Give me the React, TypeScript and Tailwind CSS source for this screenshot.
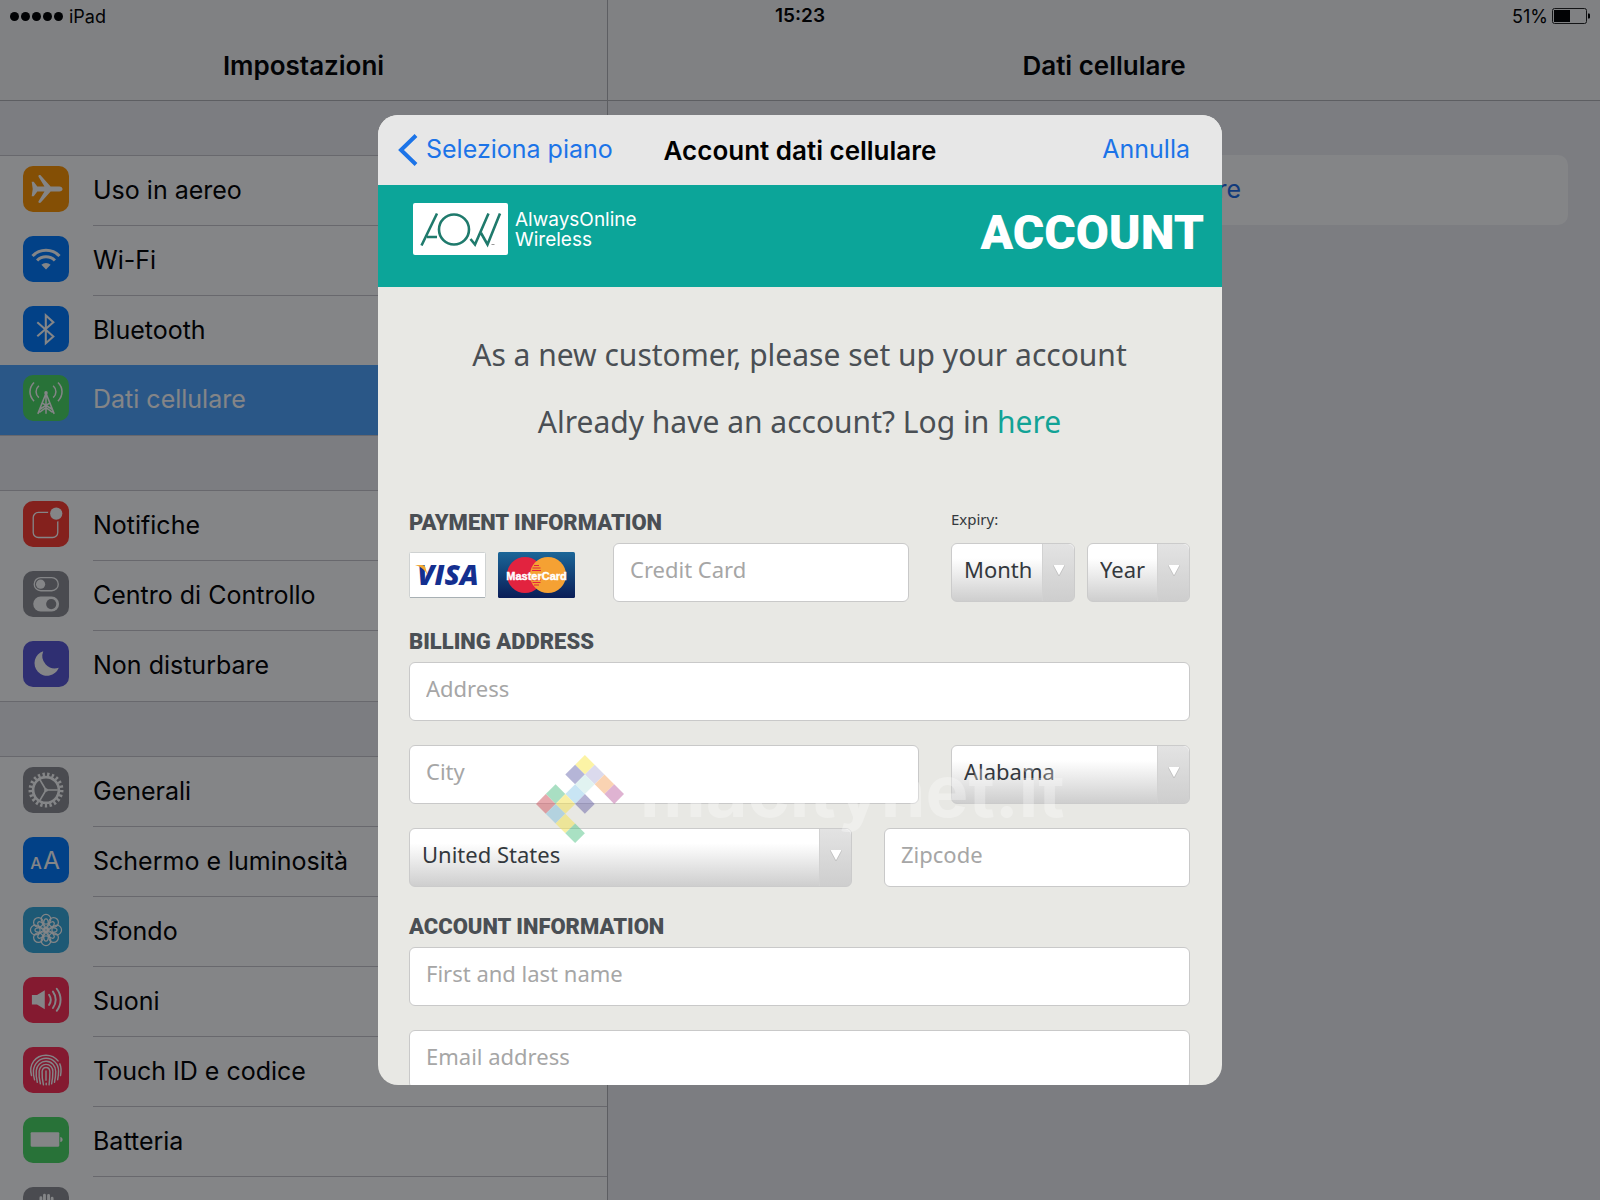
import { useId } from "react";
import type { ReactNode } from "react";

const ANGLES = [0, 45, 90, 135, 180, 225, 270, 315];

const icons: Record<string, ReactNode> = {
  airplane: (
    <path
      fill="#fff"
      d="M8.500 15.500h2L14 20h7L15.200 10.400c-.7-1.400 1.200-2.200 2.200-1.200L27 20h8.500c2 0 3.200 1.300 3.200 2.500S37.500 25 35.500 25H27l-9.600 10.800c-1 1-2.900.2-2.200-1.200L21 25h-7l-3.500 4.500h-2l1-7z"
    />
  ),
  wifi: (
    <>
      <g fill="none" stroke="#fff" strokeWidth="3">
        <path d="M9.300 19.600a18.300 18.300 0 0 1 26.400 0" />
        <path d="M13.800 24a12.200 12.200 0 0 1 17.400 0" />
      </g>
      <path fill="#fff" d="M18 28.200a6.400 6.400 0 0 1 9 0L22.500 32.700z" />
    </>
  ),
  bluetooth: (
    <path
      fill="none"
      stroke="#fff"
      strokeWidth="2"
      d="M14 16l15.700 13.800-7.400 6.600V9.200l7.400 6.600L14 29.600"
    />
  ),
  tower: (
    <g fill="none" stroke="#fff" strokeWidth="1.500">
      <path d="M15.500 10.500c-3.600 3.200-3.600 8.600 0 11.600M29.500 10.500c3.600 3.200 3.600 8.600 0 11.600" />
      <path d="M10.800 7.400c-5.300 5.200-5.300 13 0 18.200M34.200 7.400c5.300 5.200 5.300 13 0 18.200" />
      <path d="M22.500 17v21M14.500 38l7.500-19h1l7.500 19M19 27.500l9.500 6M26 27.500l-9.500 6M16 36.500l6.500-4.500 6.500 4.500" />
      <circle cx="22.500" cy="17.500" r="1" fill="#fff" />
    </g>
  ),
  notifications: (
    <>
      <rect x="10" y="11.200" width="24" height="24.500" rx="5" fill="none" stroke="#fff" strokeWidth="1.300" />
      <circle cx="32.500" cy="12.300" r="8" fill="#ff3b30" />
      <circle cx="32.500" cy="12.300" r="6" fill="#fff" />
    </>
  ),
  control: (
    <>
      <rect x="11" y="6.500" width="23.500" height="12.800" rx="6.400" fill="none" stroke="#fff" strokeWidth="1.300" />
      <circle cx="17.200" cy="12.900" r="4.500" fill="#fff" />
      <rect x="10" y="25" width="25.300" height="14.600" rx="7.300" fill="#fff" />
      <circle cx="27.600" cy="32.300" r="5" fill="#8e8e93" />
    </>
  ),
  moon: (
    <path
      fill="#fff"
      d="M19.800 10A12.300 12.300 0 1 0 35 26.200 12.300 12.300 0 0 1 19.800 10z"
    />
  ),
  gear: (
    <g fill="none" stroke="#fff">
      <circle cx="22.500" cy="22.500" r="15.300" strokeWidth="3.600" pathLength="42" strokeDasharray="1 1" />
      <circle cx="22.500" cy="22.500" r="12.600" strokeWidth="2.600" />
      <path strokeWidth="1.600" d="M22.500 22.500H34M22.500 22.500l-6-10.200M22.500 22.500l-6 10.200" />
      <circle cx="22.500" cy="22.500" r="1.300" />
    </g>
  ),
  display: (
    <g fill="#fff" fontFamily="Inter, sans-serif">
      <text x="7" y="31.500" fontSize="16" fontWeight="500">A</text>
      <text x="19.500" y="31.500" fontSize="24" fontWeight="400">A</text>
    </g>
  ),
  wallpaper: (
    <g fill="none" stroke="#fff" strokeWidth="1.200">
      {ANGLES.map((angle) => (
        <g key={angle} transform={`rotate(${angle} 22.5 22.5)`}>
          <circle cx="22.500" cy="12" r="4.700" />
          <ellipse cx="22.500" cy="16.500" rx="2.200" ry="4.800" />
        </g>
      ))}
      <circle cx="22.500" cy="22.500" r="2" />
    </g>
  ),
  sound: (
    <>
      <path fill="#fff" d="M8.700 17.500h5L21.300 13v18.500L13.700 27h-5z" />
      <g fill="none" stroke="#fff" strokeWidth="1.900" strokeLinecap="round">
        <path d="M25.500 17.300c2 3 2 7 0 10" />
        <path d="M29.300 14.300c3.600 4.800 3.600 11.200 0 16" />
        <path d="M33 11.500c5 6.500 5 15 0 21.600" />
      </g>
    </>
  ),
  fingerprint: (
    <g fill="none" stroke="#fff" strokeWidth="1.400" strokeLinecap="round">
      <path d="M8.300 28c-3-11 4-20 14.200-20 5 0 9 2 11.800 5.600M36 16.500c1.600 3.600 1.500 7.500.7 11.500" />
      <path d="M11.300 32c-1-3-1.300-6-1.100-9 .7-7 6-12 12.300-12 7 0 12.300 5.500 12.300 12.500 0 3-.3 5.500-.9 8.500" />
      <path d="M14 34.500c-1-4-1.400-8-1-11.500.5-5 4.500-9 9.500-9 5.500 0 9.500 4.500 9.500 10 0 4-.4 7-1.200 10.500" />
      <path d="M17 36c-1.200-4.500-1.500-9-1.200-12.500.4-3.700 3.300-6.500 6.700-6.500 4 0 6.700 3 6.700 7 0 4.500-.3 8-1.200 12" />
      <path d="M20 37c-1-4.500-1.500-9-1.300-13 .2-2.200 1.800-4 3.800-4 2.300 0 3.800 1.800 3.800 4.500 0 4.500-.2 8-.8 12.500" />
      <path d="M22.500 23.500v9M22.700 35.500v1.500" />
    </g>
  ),
  battery: (
    <>
      <rect x="7.500" y="15" width="28" height="14" rx="1" fill="#fff" />
      <path fill="#fff" d="M36.500 19.500c3 .5 3 4.500 0 5z" />
    </>
  ),
  privacy: (
    <path
      fill="none"
      stroke="#fff"
      strokeWidth="2.800"
      strokeLinecap="round"
      d="M17.500 20V10.500M21 18V8M25 18V8.300M28.500 20v-9M14 22l-2-5"
    />
  ),
};

type Item = { label: string; icon: string; color: string; active?: boolean };

const groups: Item[][] = [
  [
    { label: "Uso in aereo", icon: "airplane", color: "bg-[#ff9500]" },
    { label: "Wi-Fi", icon: "wifi", color: "bg-[#007aff]" },
    { label: "Bluetooth", icon: "bluetooth", color: "bg-[#007aff]" },
    { label: "Dati cellulare", icon: "tower", color: "bg-[#4cd964]", active: true },
  ],
  [
    { label: "Notifiche", icon: "notifications", color: "bg-[#ff3b30]" },
    { label: "Centro di Controllo", icon: "control", color: "bg-[#8e8e93]" },
    { label: "Non disturbare", icon: "moon", color: "bg-[#5856d6]" },
  ],
  [
    { label: "Generali", icon: "gear", color: "bg-[#8e8e93]" },
    { label: "Schermo e luminosità", icon: "display", color: "bg-[#007aff]" },
    { label: "Sfondo", icon: "wallpaper", color: "bg-[#36aadc]" },
    { label: "Suoni", icon: "sound", color: "bg-[#ff2d55]" },
    { label: "Touch ID e codice", icon: "fingerprint", color: "bg-[#ff2d55]" },
    { label: "Batteria", icon: "battery", color: "bg-[#4cd964]" },
    { label: "Privacy", icon: "privacy", color: "bg-[#8e8e93]" },
  ],
];

const SettingsRow = ({ item, last }: { item: Item; last: boolean }) => (
  <li className={item.active ? "relative -mt-px bg-[#50a5ff]" : ""}>
    <a href="#" className="flex h-[70px] items-stretch pl-[23px]">
      <span className={`mt-2.5 size-[46px] shrink-0 rounded-[10px] ${item.color}`}>
        <svg viewBox="0 0 45 45" className="size-full">
          {icons[item.icon]}
        </svg>
      </span>
      <span
        className={`ml-6 flex flex-1 items-center text-[25px] ${
          item.active ? "text-white" : "text-black"
        } ${last || item.active ? "" : "border-b border-[#c8c7cc]"}`}
      >
        {item.label}
      </span>
    </a>
  </li>
);

const Sidebar = () => (
  <aside className="flex w-[38%] flex-col border-r border-[#b2b2b6] bg-[#efeff4]">
    <h1 className="flex h-[101px] shrink-0 items-end justify-center border-b border-[#b2b2b6] bg-[#f7f7f8] pb-[15px] text-[26px] font-semibold">
      Impostazioni
    </h1>
    <nav className="flex flex-col gap-[54px] pt-[54px]">
      {groups.map((group, index) => (
        <ul key={index} className="border-y border-[#c8c7cc] bg-white">
          {group.map((item, i) => (
            <SettingsRow key={item.label} item={item} last={i === group.length - 1} />
          ))}
        </ul>
      ))}
    </nav>
  </aside>
);

const StatusBar = () => (
  <div className="absolute inset-x-0 top-0 flex h-8 items-center justify-between px-2.5 text-[18px]">
    <div className="flex flex-1 items-center gap-0.5">
      {[0, 1, 2, 3, 4].map((dot) => (
        <span key={dot} className="size-[9px] rounded-full bg-black" />
      ))}
      <span className="ml-1">iPad</span>
    </div>
    <span className="text-[19px] font-semibold">15:23</span>
    <div className="flex flex-1 items-center justify-end gap-1">
      <span>51%</span>
      <svg viewBox="0 0 38 16" className="h-4 w-[38px]">
        <rect x="0.500" y="0.500" width="34" height="15" rx="2" fill="none" stroke="#222" />
        <rect x="2" y="2" width="16" height="12" fill="#000" />
        <path d="M36 5.500h1a1 1 0 0 1 1 1v3a1 1 0 0 1-1 1h-1z" fill="#000" />
      </svg>
    </div>
  </div>
);

const fieldClass =
  "h-[59px] w-full min-w-0 rounded-md border border-[#c9c9c9] bg-white px-4 pb-[7px] text-[22px] text-[#444a50] placeholder:text-[#a6a6a6] placeholder:opacity-100";

const Field = ({ label, type = "text" }: { label: string; type?: string }) => (
  <input type={type} aria-label={label} placeholder={label} className={fieldClass} />
);

const Select = ({ label, options }: { label: string; options: string[] }) => (
  <div className="relative w-full">
    <select
      aria-label={label}
      className="h-[59px] w-full appearance-none rounded-md border border-[#cbcbcb] bg-linear-to-b from-white from-25% to-[#cecece] pb-[7px] pl-3 text-[22px] text-[#33383d]"
    >
      {options.map((option) => (
        <option key={option}>{option}</option>
      ))}
    </select>
    <span className="pointer-events-none absolute inset-y-px right-px flex w-8 items-center justify-center rounded-r-md border-l border-[#d2d2d2] bg-linear-to-b from-[#e3e3e3] to-[#cecece] pb-1">
      <svg viewBox="0 0 12 11" className="h-[11px] w-3">
        <path d="M0 0h12L6 11z" fill="#fff" />
        <path d="M12 0L6 11 0 0" fill="none" stroke="#b5b5b5" strokeWidth="0.700" />
      </svg>
    </span>
  </div>
);

const SectionTitle = ({ children }: { children: ReactNode }) => (
  <h3 className="font-['Roboto',sans-serif] text-[22px] leading-6 font-black text-[#4a4f54]">
    {children}
  </h3>
);

const AowLogo = () => (
  <svg viewBox="0 0 95 52" className="h-[52px] w-[95px] rounded-xs bg-white">
    <g fill="none" stroke="#1f7a6c" strokeWidth="2.600">
      <path d="M8.500 42.500L24 10.500M14 34h10" />
      <circle cx="41" cy="26.500" r="15" />
      <path d="M57.500 36l4.500 5.500L75.500 10.500M68 30l6.500 11.500L87 10.500" />
    </g>
    <path d="M78.500 41.500h3" stroke="#999" strokeWidth="1" />
  </svg>
);

const VisaCard = () => (
  <svg viewBox="0 0 77 46" role="img" aria-label="Visa" className="h-[46px] w-[77px]">
    <rect x="0.500" y="0.500" width="76" height="45" rx="1" fill="#fff" stroke="#cfd2d2" />
    <path d="M1 45.500h75" stroke="#a8b0b4" />
    <text
      x="39"
      y="33"
      textAnchor="middle"
      fontFamily="Open Sans, sans-serif"
      fontSize="28"
      fontWeight="800"
      fontStyle="italic"
      fill="#142f8f"
    >
      VISA
    </text>
    <path d="M6 13h7c2 0 3 1 3.400 2.500L18.500 23C16 18 12 14.500 6 13z" fill="#f0a832" />
  </svg>
);

const MasterCard = () => {
  const id = useId();
  return (
    <svg viewBox="0 0 77 46" role="img" aria-label="MasterCard" className="h-[46px] w-[77px]">
      <defs>
        <linearGradient id={id} x1="0" y1="0" x2="0" y2="1">
          <stop offset="0" stopColor="#1b6698" />
          <stop offset="1" stopColor="#0a1d57" />
        </linearGradient>
      </defs>
      <rect width="77" height="46" rx="1.500" fill={`url(#${id})`} />
      <circle cx="27" cy="23" r="18" fill="#e2233f" />
      <circle cx="50" cy="23" r="18" fill="#f5a133" />
      <path
        stroke="#e2233f"
        strokeWidth="1"
        d="M36 13.500h5M34.500 16h8M34 18.500h9M34 28h9M34.500 30.500h8M36 33h5"
      />
      <text
        x="38.500"
        y="27.500"
        textAnchor="middle"
        fontFamily="Liberation Sans, sans-serif"
        fontSize="11"
        fontWeight="700"
        fill="#fff"
        stroke="#fff"
        strokeWidth="0.400"
      >
        MasterCard
      </text>
    </svg>
  );
};

// [x, y, colour] of every tile, in units of half a tile diagonal
const tiles: [number, number, string][] = [
  [5, 1, "#fbe94d"],
  [4, 2, "#6d6db0"],
  [6, 2, "#b9b7dd"],
  [5, 3, "#c5e8e4"],
  [7, 3, "#f7a868"],
  [4, 4, "#93cdea"],
  [8, 4, "#c06aa6"],
  [2, 4, "#56c088"],
  [1, 5, "#cf5560"],
  [3, 5, "#f3e04e"],
  [5, 5, "#6a65a8"],
  [2, 6, "#7fbedb"],
  [3, 7, "#f3e34e"],
  [4, 8, "#55c488"],
];

const Watermark = () => (
  <div className="pointer-events-none absolute top-[640px] left-[158px] flex items-start gap-4">
    <svg viewBox="0 0 9 9" className="size-[88px] opacity-50">
      {tiles.map(([x, y, fill]) => (
        <path key={`${x}-${y}`} d={`M${x} ${y - 1}l1 1-1 1-1-1z`} fill={fill} />
      ))}
    </svg>
    <span className="text-[72px] leading-none font-bold text-white/30">macitynet.it</span>
  </div>
);

const AccountForm = () => (
  <form className="flex flex-col pr-8 pl-[31px] font-['Noto_Sans',sans-serif]">
    <div className="flex flex-col gap-[25px] pt-[47px] text-center text-[30px] leading-[42px] text-[#4a4f54]">
      <p>As a new customer, please set up your account</p>
      <p>
        Already have an account? Log in{" "}
        <a href="#" className="text-[#12a396]">
          here
        </a>
      </p>
    </div>

    <div className="flex items-end pt-[66px]">
      <div className="flex w-[204px] flex-col gap-[17px] pb-1 whitespace-nowrap">
        <SectionTitle>PAYMENT INFORMATION</SectionTitle>
        <div className="flex gap-3">
          <VisaCard />
          <MasterCard />
        </div>
      </div>
      <div className="flex-1">
        <Field label="Credit Card" />
      </div>
      <fieldset className="ml-[42px] w-[239px] text-[15px] leading-5">
        <legend className="mb-[14px] text-[#33383d]">Expiry:</legend>
        <div className="flex gap-3">
          <div className="w-[124px]">
            <Select label="Month" options={["Month", "01", "02", "03", "04", "05", "06"]} />
          </div>
          <div className="flex-1">
            <Select label="Year" options={["Year", "2016", "2017", "2018", "2019"]} />
          </div>
        </div>
      </fieldset>
    </div>

    <div className="pt-7 pb-2">
      <SectionTitle>BILLING ADDRESS</SectionTitle>
    </div>
    <div className="flex flex-col gap-6">
      <Field label="Address" />
      <div className="flex gap-8">
        <Field label="City" />
        <div className="w-[239px] shrink-0">
          <Select label="State" options={["Alabama", "Alaska", "Arizona", "Arkansas"]} />
        </div>
      </div>
      <div className="flex gap-8">
        <Select label="Country" options={["United States", "Italy", "United Kingdom"]} />
        <div className="w-[306px] shrink-0">
          <Field label="Zipcode" />
        </div>
      </div>
    </div>

    <div className="pt-7 pb-2">
      <SectionTitle>ACCOUNT INFORMATION</SectionTitle>
    </div>
    <div className="flex flex-col gap-6">
      <Field label="First and last name" />
      <Field label="Email address" type="email" />
    </div>
  </form>
);

const AccountDialog = () => (
  <div className="absolute inset-0 flex justify-center bg-[#04060a]/49 py-[115px]">
    <div
      role="dialog"
      aria-label="Account dati cellulare"
      className="relative w-full max-w-[844px] overflow-hidden rounded-[20px] bg-[#e8e8e4]"
    >
      <div className="grid h-[70px] grid-cols-[1fr_auto_1fr] items-center bg-[#e7e7e7] px-5 text-[25px]">
        <button type="button" className="flex items-center gap-2 text-[#1c74e8]">
          <svg viewBox="0 0 20 32" className="h-8 w-5">
            <path d="M18 1.500L3 16l15 14.500" fill="none" stroke="currentColor" strokeWidth="4" />
          </svg>
          Seleziona piano
        </button>
        <h2 className="text-[26px] font-semibold">Account dati cellulare</h2>
        <button type="button" className="mr-3 justify-self-end text-[#1c74e8]">
          Annulla
        </button>
      </div>
      <div className="flex h-[102px] justify-between bg-[#0ca599] pt-[18px] pr-[18px] pl-[35px] text-white">
        <div className="flex items-start gap-[7px]">
          <AowLogo />
          <p className="pt-[7px] text-[19px] leading-5">
            AlwaysOnline
            <br />
            Wireless
          </p>
        </div>
        <p className="font-['Roboto',sans-serif] text-[48px] leading-[60px] font-black">ACCOUNT</p>
      </div>
      <AccountForm />
      <Watermark />
    </div>
  </div>
);

const App = () => (
  <div className="relative flex h-screen overflow-hidden bg-[#efeff4] font-['Inter',sans-serif] text-black">
    <Sidebar />
    <main className="flex flex-1 flex-col">
      <h1 className="flex h-[101px] items-end justify-center border-b border-[#b2b2b6] bg-[#f7f7f8] pb-[15px] text-[26px] font-semibold">
        Dati cellulare
      </h1>
      <div className="px-8 pt-[54px]">
        <button
          type="button"
          className="h-[70px] w-full rounded-[10px] bg-white text-[25px] text-[#1c6ce8]"
        >
          Configura dati cellulare
        </button>
      </div>
    </main>
    <StatusBar />
    <AccountDialog />
  </div>
);

export default App;
